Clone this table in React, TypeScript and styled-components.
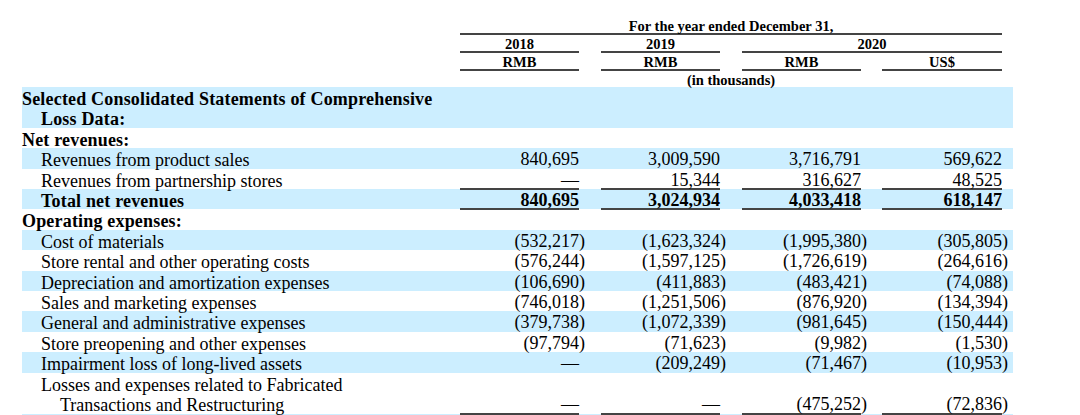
import React from 'react';
import styled, { createGlobalStyle } from 'styled-components';

const GlobalStyle = createGlobalStyle`
  html, body {
    margin: 0;
    padding: 0;
    background: #fff;
  }
  body {
    font-family: "Liberation Serif", "Times New Roman", serif;
    color: #000;
  }
`;

// label | 2018 | gap | 2019 | gap | 2020 RMB | gap | 2020 US$ | tail
const COLUMNS = '438px 119px 22px 119px 22px 119px 21px 120px 11px';
const VALUE_COLUMNS = [2, 4, 6, 8];
const RULE = '2px solid #444';

interface LineItem {
  label: string[];
  level: number;
  bold?: boolean;
  shaded?: boolean;
  ruled?: boolean;
  values?: string[];
}

const items: LineItem[] = [
  {
    label: ['Selected Consolidated Statements of Comprehensive', 'Loss Data:'],
    level: 0,
    bold: true,
    shaded: true,
  },
  { label: ['Net revenues:'], level: 0, bold: true },
  {
    label: ['Revenues from product sales'],
    level: 1,
    shaded: true,
    values: ['840,695', '3,009,590', '3,716,791', '569,622'],
  },
  {
    label: ['Revenues from partnership stores'],
    level: 1,
    ruled: true,
    values: ['—', '15,344', '316,627', '48,525'],
  },
  {
    label: ['Total net revenues'],
    level: 1,
    bold: true,
    shaded: true,
    ruled: true,
    values: ['840,695', '3,024,934', '4,033,418', '618,147'],
  },
  { label: ['Operating expenses:'], level: 0, bold: true },
  {
    label: ['Cost of materials'],
    level: 1,
    shaded: true,
    values: ['(532,217)', '(1,623,324)', '(1,995,380)', '(305,805)'],
  },
  {
    label: ['Store rental and other operating costs'],
    level: 1,
    values: ['(576,244)', '(1,597,125)', '(1,726,619)', '(264,616)'],
  },
  {
    label: ['Depreciation and amortization expenses'],
    level: 1,
    shaded: true,
    values: ['(106,690)', '(411,883)', '(483,421)', '(74,088)'],
  },
  {
    label: ['Sales and marketing expenses'],
    level: 1,
    values: ['(746,018)', '(1,251,506)', '(876,920)', '(134,394)'],
  },
  {
    label: ['General and administrative expenses'],
    level: 1,
    shaded: true,
    values: ['(379,738)', '(1,072,339)', '(981,645)', '(150,444)'],
  },
  {
    label: ['Store preopening and other expenses'],
    level: 1,
    values: ['(97,794)', '(71,623)', '(9,982)', '(1,530)'],
  },
  {
    label: ['Impairment loss of long-lived assets'],
    level: 1,
    shaded: true,
    values: ['—', '(209,249)', '(71,467)', '(10,953)'],
  },
  {
    label: ['Losses and expenses related to Fabricated', 'Transactions and Restructuring'],
    level: 1,
    ruled: true,
    values: ['—', '—', '(475,252)', '(72,836)'],
  },
];

const Amount = ({ value }: { value: string }) =>
  value.endsWith(')') ? (
    <>
      {value.slice(0, -1)}
      <Close>)</Close>
    </>
  ) : (
    <>{value}</>
  );

export default function App() {
  return (
    <>
      <GlobalStyle />
      <Page>
        <Statement>
          <HeadRow>
            <HeadCell $from={2} $to={9} $ruled>
              For the year ended December 31,
            </HeadCell>
          </HeadRow>
          <HeadRow>
            <HeadCell $from={2} $to={3} $ruled>
              2018
            </HeadCell>
            <HeadCell $from={4} $to={5} $ruled>
              2019
            </HeadCell>
            <HeadCell $from={6} $to={9} $ruled>
              2020
            </HeadCell>
          </HeadRow>
          <HeadRow>
            {['RMB', 'RMB', 'RMB', 'US$'].map((unit, i) => (
              <HeadCell key={i} $from={VALUE_COLUMNS[i]} $to={VALUE_COLUMNS[i] + 1} $ruled>
                {unit}
              </HeadCell>
            ))}
          </HeadRow>
          <HeadRow>
            <HeadCell $from={2} $to={9}>
              (in thousands)
            </HeadCell>
          </HeadRow>

          {items.map(item => (
            <BodyRow key={item.label[0]} $shaded={item.shaded} $bold={item.bold}>
              <Label $level={item.level} $bold={item.bold}>
                {item.label.map((line, i) => (
                  <LabelLine key={line} $wrapped={i > 0}>
                    {line}
                  </LabelLine>
                ))}
              </Label>
              {item.values?.map((value, i) => (
                <Value key={i} $col={VALUE_COLUMNS[i]} $ruled={item.ruled}>
                  <Amount value={value} />
                </Value>
              ))}
            </BodyRow>
          ))}
          {/* top of the next shaded row, cut by the frame */}
          <BodyRow $shaded />
        </Statement>
      </Page>
    </>
  );
}

const Page = styled.main`
  padding: 17px 0 0 22px;
`;

const Statement = styled.section`
  width: 991px;
`;

const HeadRow = styled.div`
  display: grid;
  grid-template-columns: ${COLUMNS};
  font-size: 14.5px;
  font-weight: bold;
  line-height: 14px;
`;

const HeadCell = styled.div<{ $from: number; $to: number; $ruled?: boolean }>`
  grid-column: ${p => p.$from} / ${p => p.$to};
  padding-top: 2px;
  text-align: center;
  border-bottom: ${p => (p.$ruled ? RULE : '0')};
  white-space: nowrap;
`;

const BodyRow = styled.div<{ $shaded?: boolean; $bold?: boolean }>`
  display: grid;
  grid-template-columns: ${COLUMNS};
  padding-top: 4px;
  background: ${p => (p.$shaded ? '#cceeff' : 'transparent')};
  font-size: 18px;
  line-height: 16.4px;
  font-weight: ${p => (p.$bold ? 'bold' : 'normal')};
`;

const Label = styled.div<{ $level: number; $bold?: boolean }>`
  grid-column: 1 / 2;
  grid-row: 1;
  padding-left: ${p => p.$level * 19}px;
  letter-spacing: ${p => (p.$bold ? '0.18px' : '0')};
  white-space: nowrap;
`;

const LabelLine = styled.div<{ $wrapped?: boolean }>`
  padding-left: ${p => (p.$wrapped ? 19 : 0)}px;
  padding-top: ${p => (p.$wrapped ? 4 : 0)}px;
`;

const Value = styled.div<{ $col: number; $ruled?: boolean }>`
  grid-column: ${p => p.$col} / ${p => p.$col + 1};
  grid-row: 1;
  align-self: end;
  text-align: right;
  white-space: nowrap;
  border-bottom: ${p => (p.$ruled ? RULE : '2px solid transparent')};
  margin: -1px 0;
`;

const Close = styled.span`
  display: inline-block;
  width: 0;
`;
